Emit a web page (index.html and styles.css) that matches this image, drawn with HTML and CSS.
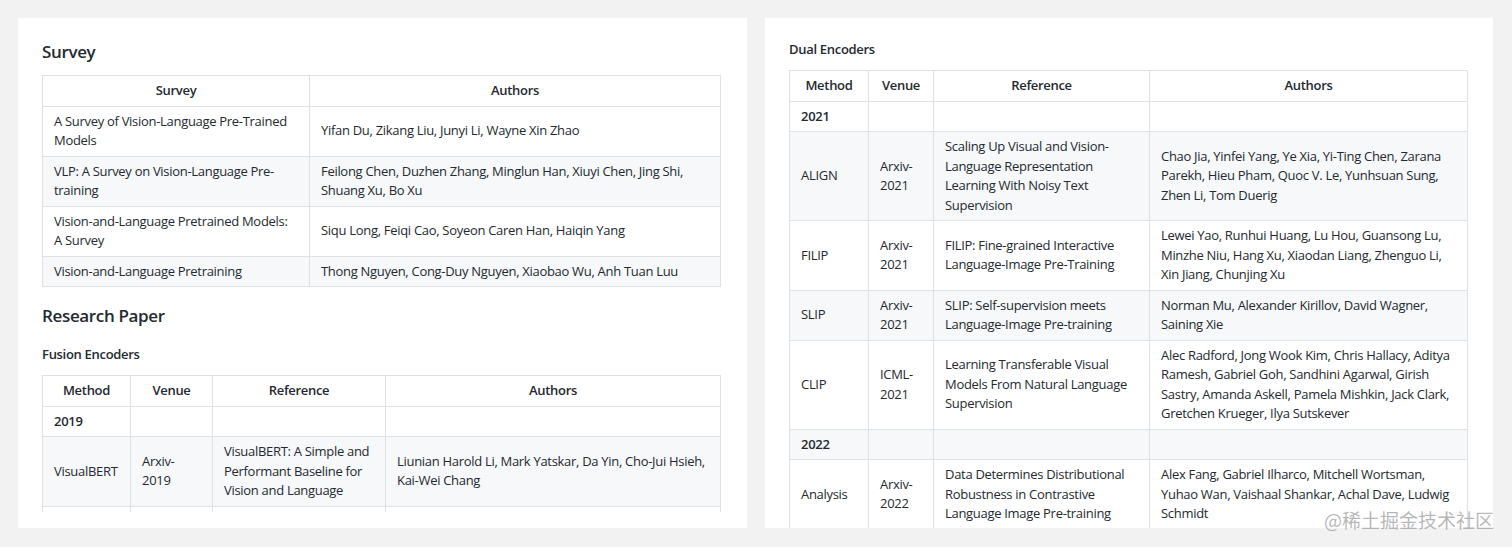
FILE: index.html
```html
<!DOCTYPE html>
<html lang="en">
<head>
<meta charset="utf-8">
<title>VLP Survey</title>
<link rel="stylesheet" href="styles.css">
</head>
<body>
<div class="page">
  <section class="panel panel-left">
    <div class="clip">
      <h3 class="h-main">Survey</h3>
      <table class="md-table">
        <colgroup><col class="c-s1"><col class="c-s2"></colgroup>
        <thead><tr><th>Survey</th><th>Authors</th></tr></thead>
        <tbody>
          <tr><td>A Survey of Vision-Language Pre-Trained Models</td><td>Yifan Du, Zikang Liu, Junyi Li, Wayne Xin Zhao</td></tr>
          <tr><td>VLP: A Survey on Vision-Language Pre-training</td><td>Feilong Chen, Duzhen Zhang, Minglun Han, Xiuyi Chen, Jing Shi, Shuang Xu, Bo Xu</td></tr>
          <tr><td>Vision-and-Language Pretrained Models: A Survey</td><td>Siqu Long, Feiqi Cao, Soyeon Caren Han, Haiqin Yang</td></tr>
          <tr><td>Vision-and-Language Pretraining</td><td>Thong Nguyen, Cong-Duy Nguyen, Xiaobao Wu, Anh Tuan Luu</td></tr>
        </tbody>
      </table>
      <h3 class="h-main h-research">Research Paper</h3>
      <h4 class="h-sub h-fusion">Fusion Encoders</h4>
      <table class="md-table">
        <colgroup><col class="c-f1"><col class="c-f2"><col class="c-f3"><col class="c-f4"></colgroup>
        <thead><tr><th>Method</th><th>Venue</th><th>Reference</th><th>Authors</th></tr></thead>
        <tbody>
          <tr><td class="year">2019</td><td></td><td></td><td></td></tr>
          <tr><td>VisualBERT</td><td>Arxiv-2019</td><td>VisualBERT: A Simple and Performant Baseline for Vision and Language</td><td>Liunian Harold Li, Mark Yatskar, Da Yin, Cho-Jui Hsieh, Kai-Wei Chang</td></tr>
          <tr><td>ViLBERT</td><td>NeurIPS-2019</td><td>ViLBERT: Pretraining Task-Agnostic Visiolinguistic Representations for Vision-and-Language Tasks</td><td>Jiasen Lu, Dhruv Batra, Devi Parikh, Stefan Lee</td></tr>
        </tbody>
      </table>
    </div>
  </section>
  <section class="panel panel-right">
    <div class="clip">
      <h4 class="h-sub h-dual">Dual Encoders</h4>
      <table class="md-table">
        <colgroup><col class="c-d1"><col class="c-d2"><col class="c-d3"><col class="c-d4"></colgroup>
        <thead><tr><th>Method</th><th>Venue</th><th>Reference</th><th>Authors</th></tr></thead>
        <tbody>
          <tr><td class="year">2021</td><td></td><td></td><td></td></tr>
          <tr><td>ALIGN</td><td>Arxiv-2021</td><td>Scaling Up Visual and Vision-Language Representation Learning With Noisy Text Supervision</td><td>Chao Jia, Yinfei Yang, Ye Xia, Yi-Ting Chen, Zarana Parekh, Hieu Pham, Quoc V. Le, Yunhsuan Sung, Zhen Li, Tom Duerig</td></tr>
          <tr><td>FILIP</td><td>Arxiv-2021</td><td>FILIP: Fine-grained Interactive Language-Image Pre-Training</td><td>Lewei Yao, Runhui Huang, Lu Hou, Guansong Lu, Minzhe Niu, Hang Xu, Xiaodan Liang, Zhenguo Li, Xin Jiang, Chunjing Xu</td></tr>
          <tr><td>SLIP</td><td>Arxiv-2021</td><td>SLIP: Self-supervision meets Language-Image Pre-training</td><td>Norman Mu, Alexander Kirillov, David Wagner, Saining Xie</td></tr>
          <tr><td>CLIP</td><td>ICML-2021</td><td>Learning Transferable Visual Models From Natural Language Supervision</td><td>Alec Radford, Jong Wook Kim, Chris Hallacy, Aditya Ramesh, Gabriel Goh, Sandhini Agarwal, Girish Sastry, Amanda Askell, Pamela Mishkin, Jack Clark, Gretchen Krueger, Ilya Sutskever</td></tr>
          <tr><td class="year">2022</td><td></td><td></td><td></td></tr>
          <tr><td>Analysis</td><td>Arxiv-2022</td><td>Data Determines Distributional Robustness in Contrastive Language Image Pre-training</td><td>Alex Fang, Gabriel Ilharco, Mitchell Wortsman, Yuhao Wan, Vaishaal Shankar, Achal Dave, Ludwig Schmidt</td></tr>
        </tbody>
      </table>
    </div>
  </section>
  <div class="watermark">@稀土掘金技术社区</div>
</div>
</body>
</html>
```
FILE: styles.css
```css
* { box-sizing: border-box; }
html, body { margin: 0; padding: 0; }
body {
  background: #f2f2f2;
  font-family: "Open Sans", "Noto Sans", "Liberation Sans", sans-serif;
  color: #24292f;
  width: 1512px;
  height: 547px;
  overflow: hidden;
}
.page {
  position: relative;
  display: flex;
  gap: 18px;
  padding: 18px 0 0 18px;
  height: 547px;
}
.panel {
  background: #ffffff;
  height: 510px;
  overflow: hidden;
}
.panel-left { width: 729px; padding: 22px 26px 16px 24px; }
.panel-right { width: 728px; padding: 21px 25px 0 24px; }
.clip { height: 100%; overflow: hidden; }

.h-main {
  margin: 0;
  font-size: 17px;
  line-height: 24px;
  font-weight: 600;
  letter-spacing: -0.35px;
}
.h-research { margin-top: 17px; }
.h-sub {
  margin: 0;
  font-size: 13px;
  line-height: 20px;
  font-weight: 600;
  letter-spacing: -0.3px;
}
.h-fusion { margin-top: 16px; }

.md-table {
  border-collapse: collapse;
  table-layout: fixed;
  width: 678px;
  font-size: 13px;
  line-height: 19.5px;
  letter-spacing: -0.3px;
  margin-top: 12px;
}
.h-main + .md-table { margin-top: 11px; }
.h-sub + .md-table { margin-top: 11px; }
.md-table th, .md-table td {
  border: 1px solid #dfe2e5;
  padding: 5px 11px;
  vertical-align: middle;
  text-align: left;
}
.md-table th { font-weight: 600; text-align: center; }
.md-table tbody tr:nth-child(2n) { background: #f6f8fa; }
.md-table td.year { font-weight: 600; }

.c-s1 { width: 267px; }
.c-s2 { width: 411px; }
.c-f1 { width: 88px; }
.c-f2 { width: 82px; }
.c-f3 { width: 173px; }
.c-f4 { width: 335px; }
.c-d1 { width: 79px; }
.c-d2 { width: 65px; }
.c-d3 { width: 216px; }
.c-d4 { width: 318px; }

.watermark {
  position: absolute;
  right: 18px;
  bottom: 16px;
  font-family: "Noto Sans CJK SC", sans-serif;
  font-size: 19px;
  line-height: 22px;
  color: rgba(160, 160, 160, 0.75);
}
```
